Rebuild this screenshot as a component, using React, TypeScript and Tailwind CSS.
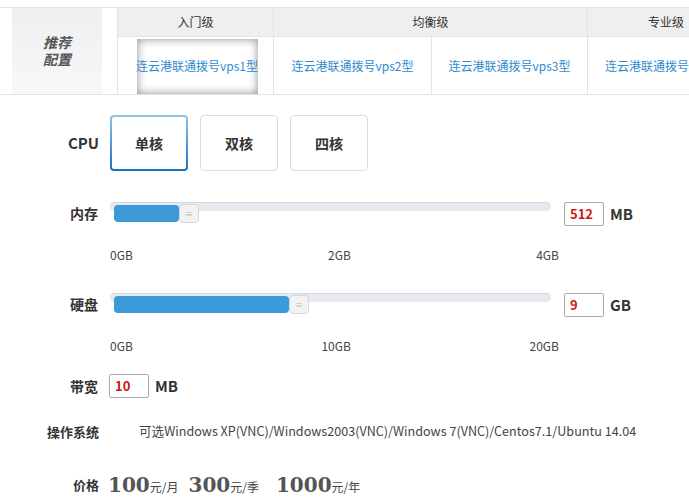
import React from 'react';

const font = { fontFamily: '"Noto Sans CJK SC", "Noto Sans", sans-serif' };
const priceFont = { fontFamily: '"DejaVu Serif", "Liberation Serif", serif' };

function Slider({ fill }: { fill: number }) {
    return (
        <div className="relative h-[22px] w-[441px]">
            <div className="absolute left-0 top-0 h-[9px] w-[441px] rounded-[5px] bg-[#e6eaef] border-t border-[#d3d8de]" />
            <div className="absolute left-[4px] top-[3px] h-[17px] rounded-[4px] bg-[#3d9ad8]" style={{ width: fill }} />
            <div
                className="absolute top-[2px] h-[19px] w-[20px] rounded-[4px] border border-[#d6d6d6] bg-[#f2f2f2] flex items-center justify-center text-[8px] text-[#bbb] leading-none"
                style={{ left: fill + 4 }}
            >
                ≡
            </div>
        </div>
    );
}

function ValueBox({ value, unit }: { value: string; unit: string }) {
    return (
        <div className="flex items-center">
            <div className="w-[40px] h-[24px] border border-[#aaa] rounded-[2px] flex items-center px-[5px] text-[13px] font-bold text-[#d01515]">{value}</div>
            <span className="ml-[6px] text-[15px] font-bold">{unit}</span>
        </div>
    );
}

export default function App() {
    return (
        <main className="w-[689px] h-[501px] overflow-hidden bg-white text-[#333]" style={font}>
            {/* Recommended configs */}
            <div className="mt-[7px] flex h-[88px] border-y border-[#e3e3e3]">
                <div className="ml-[12px] w-[90px] shrink-0 flex flex-col items-center justify-center bg-gradient-to-b from-[#eeeff1] to-[#f8f8f9] text-[14px] font-bold italic text-[#555]">
                    <span className="leading-[17px]">推荐</span>
                    <span className="leading-[17px]">配置</span>
                </div>
                <div className="ml-[15px] shrink-0 flex flex-col border-l border-[#e3e3e3] text-[12px] whitespace-nowrap">
                    <div className="flex h-[29px] bg-[#efefef] border-b border-[#e3e3e3]">
                        <div className="w-[156px] shrink-0 flex items-center justify-center border-r border-[#e3e3e3]">入门级</div>
                        <div className="w-[314px] shrink-0 flex items-center justify-center border-r border-[#e3e3e3]">均衡级</div>
                        <div className="w-[156px] shrink-0 flex items-center justify-center">专业级</div>
                    </div>
                    <div className="flex flex-1 text-[#2f8bd0]">
                        <div className="w-[156px] shrink-0 flex items-center justify-center border-r border-[#e3e3e3] pt-[1px]">
                            <div className="w-[121px] h-[55px] ml-[3px] flex items-center justify-center shadow-[inset_0_0_10px_rgba(0,0,0,0.45)]">
                                连云港联通拨号vps1型
                            </div>
                        </div>
                        <div className="w-[158px] shrink-0 flex items-center justify-center border-r border-[#e3e3e3]">连云港联通拨号vps2型</div>
                        <div className="w-[156px] shrink-0 flex items-center justify-center border-r border-[#e3e3e3]">连云港联通拨号vps3型</div>
                        <div className="w-[156px] shrink-0 flex items-center justify-center">连云港联通拨号vps4型</div>
                    </div>
                </div>
            </div>

            {/* CPU */}
            <div className="mt-[20px] flex items-center h-[56px]">
                <div className="w-[100px] text-right pr-[1px] text-[15px] font-bold">CPU</div>
                <div className="ml-[10px] flex gap-[12px]">
                    <div className="w-[78px] h-[56px] rounded-[4px] p-[2px] bg-gradient-to-b from-[#8ec3ea] to-[#0f72bf]">
                        <div className="h-full w-full rounded-[2px] bg-white flex items-center justify-center text-[14px] font-bold">单核</div>
                    </div>
                    <div className="w-[78px] h-[56px] rounded-[4px] border border-[#dcdcdc] flex items-center justify-center text-[14px] font-bold">双核</div>
                    <div className="w-[78px] h-[56px] rounded-[4px] border border-[#dcdcdc] flex items-center justify-center text-[14px] font-bold">四核</div>
                </div>
            </div>

            {/* Memory */}
            <div className="mt-[31px] flex items-start">
                <div className="w-[100px] text-right pr-[2px] text-[14px] font-bold leading-[20px] pt-[1px]">内存</div>
                <div className="ml-[10px]">
                    <Slider fill={65} />
                    <div className="mt-[22px] flex justify-between w-[449px] text-[12px] text-[#444]">
                        <span>0GB</span><span className="ml-[10px]">2GB</span><span>4GB</span>
                    </div>
                </div>
                <div className="ml-[5px]">
                    <ValueBox value="512" unit="MB" />
                </div>
            </div>

            {/* Disk */}
            <div className="mt-[29px] flex items-start">
                <div className="w-[100px] text-right pr-[2px] text-[14px] font-bold leading-[20px] pt-[1px]">硬盘</div>
                <div className="ml-[10px]">
                    <Slider fill={175} />
                    <div className="mt-[22px] flex justify-between w-[449px] text-[12px] text-[#444]">
                        <span>0GB</span><span className="ml-[10px]">10GB</span><span>20GB</span>
                    </div>
                </div>
                <div className="ml-[5px]">
                    <ValueBox value="9" unit="GB" />
                </div>
            </div>

            {/* Bandwidth */}
            <div className="mt-[19px] flex items-center">
                <div className="w-[100px] text-right pr-[2px] text-[14px] font-bold">带宽</div>
                <div className="ml-[9px]">
                    <ValueBox value="10" unit="MB" />
                </div>
            </div>

            {/* OS */}
            <div className="mt-[24px] flex items-center">
                <div className="w-[100px] text-right pr-[1px] text-[13px] font-bold">操作系统</div>
                <div className="ml-[39px] text-[12.6px] text-[#444] whitespace-nowrap">可选Windows XP(VNC)/Windows2003(VNC)/Windows 7(VNC)/Centos7.1/Ubuntu 14.04</div>
            </div>

            {/* Price */}
            <div className="mt-[28px] flex items-center">
                <div className="w-[100px] text-right pr-[1px] text-[13px] font-bold">价格</div>
                <div className="ml-[8px] flex items-baseline text-[12px] text-[#444]">
                    <span className="text-[20px] font-bold text-[#555]" style={priceFont}>100</span>
                    <span>元/月</span>
                    <span className="ml-[10px] text-[20px] font-bold text-[#555]" style={priceFont}>300</span>
                    <span>元/季</span>
                    <span className="ml-[17px] text-[20px] font-bold text-[#555]" style={priceFont}>1000</span>
                    <span>元/年</span>
                </div>
            </div>
        </main>
    );
}
